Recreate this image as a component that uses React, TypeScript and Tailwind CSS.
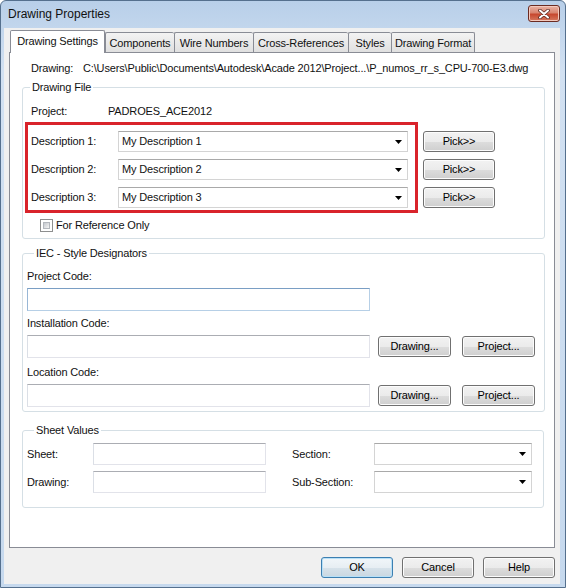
import type { ReactNode } from 'react';

const btnFace =
  'bg-[linear-gradient(to_bottom,#f2f2f2_0%,#ebebeb_50%,#dddddd_51%,#cfcfcf_100%)] shadow-[inset_0_0_0_1px_#fcfcfc]';

function WinButton({ label, className = '', primary = false }: { label: string; className?: string; primary?: boolean }) {
  return (
    <button
      className={`${className} h-[21px] rounded-[3px] border flex items-center justify-center text-black ${
        primary
          ? 'border-[#3c7fb1] bg-[linear-gradient(to_bottom,#f1f6f9_0%,#e7eef3_50%,#d7e2ea_51%,#c9d7e1_100%)] shadow-[inset_0_0_0_1px_#b8e0f7]'
          : `border-[#707070] ${btnFace}`
      }`}
    >
      {label}
    </button>
  );
}

function TextBox({ className = '', focused = false }: { className?: string; focused?: boolean }) {
  return (
    <div
      className={`${className} bg-white border ${
        focused
          ? 'border-[#b6cfe6] border-t-[#7a9ec4] border-l-[#98b7d6]'
          : 'border-[#e2e3ea] border-t-[#abadb3] border-l-[#dbdfe6]'
      }`}
    />
  );
}

function Combo({ value = '', className = '' }: { value?: string; className?: string }) {
  return (
    <div
      className={`${className} bg-white border border-[#d4d4d4] border-t-[#a9a9a9] flex items-center pl-[3px] pr-[5px]`}
    >
      <span className="flex-1 truncate">{value}</span>
      <svg width="7" height="4" viewBox="0 0 7 4" className="shrink-0">
        <path d="M0 0H7L3.5 4Z" fill="#000" />
      </svg>
    </div>
  );
}

function Group({ title, children, className = '' }: { title: string; children: ReactNode; className?: string }) {
  return (
    <fieldset className={`${className} border border-[#d5dfe5] rounded-[3px] flex flex-col`}>
      <legend className="ml-[7px] px-[2px] leading-[13px]">{title}</legend>
      {children}
    </fieldset>
  );
}

const tabs = ['Components', 'Wire Numbers', 'Cross-References', 'Styles', 'Drawing Format'];
const tabWidths = ['w-[69px]', 'w-[79px]', 'w-[95px]', 'w-[43px]', 'w-[84px] border-r'];

export default function App() {
  return (
    <div className="w-[566px] h-[588px] flex flex-col border border-[#55708e] rounded-t-[6px] bg-[linear-gradient(to_bottom,#b8cfe9_0%,#d2e1f2_12%,#c6d9ee_100%)] font-['Liberation_Sans',Arial,sans-serif] text-[11px] leading-[13px] tracking-[-0.15px] text-[#111]">
      {/* title bar */}
      <div className="h-[27px] flex items-start pl-[7px] pr-[5px] shrink-0">
        <span className="mt-[6px] text-[12px] leading-[15px] tracking-normal">Drawing Properties</span>
        <div className="ml-auto mt-[4px] w-[32px] h-[17px] rounded-[3px] border border-[#6b2b22] bg-[linear-gradient(to_bottom,#eab2a4_0%,#d98570_45%,#c7482f_55%,#d6795f_100%)] shadow-[inset_0_0_0_1px_#f3c9bd] flex items-center justify-center">
          <svg width="12" height="10" viewBox="0 0 12 10">
            <path d="M2 1.5L10 8.5M10 1.5L2 8.5" stroke="#5a2a22" strokeWidth="3.6" strokeLinecap="round" />
            <path d="M2 1.5L10 8.5M10 1.5L2 8.5" stroke="#ffffff" strokeWidth="2" strokeLinecap="round" />
          </svg>
        </div>
      </div>

      {/* client */}
      <div className="ml-[3px] mr-[5px] mb-[3px] h-[556px] bg-[#f0f0f0] px-[5px] pt-[2px] flex flex-col">
        {/* tab strip */}
        <div className="h-[22px] flex items-end pl-[1px] shrink-0">
          <div className="relative z-10 -mb-[1px] w-[95px] h-[23px] bg-white border border-b-0 border-[#898c95] rounded-t-[2px] flex items-center justify-center pb-[1px]">
            Drawing Settings
          </div>
          {tabs.map((t, i) => (
            <div
              key={t}
              className={`${tabWidths[i]} h-[20px] border-t border-l border-[#898c95] rounded-t-[2px] bg-[linear-gradient(to_bottom,#f3f3f3,#e0e0e0)] flex items-center justify-center pt-[1px]`}
            >
              {t}
            </div>
          ))}
        </div>

        {/* panel */}
        <div className="flex-1 bg-white border border-[#898c95] pt-[9px] pl-[12px] pr-[9px] flex flex-col">
          <div className="flex h-[13px] pl-[9px]">
            <span className="w-[52px]">Drawing:</span>
            <span>C:\Users\Public\Documents\Autodesk\Acade 2012\Project...\P_numos_rr_s_CPU-700-E3.dwg</span>
          </div>

          <Group title="Drawing File" className="mt-[6px] pb-[6px]">
            <div className="flex h-[13px] mt-[11px] pl-[8px]">
              <span className="w-[77px]">Project:</span>
              <span>PADROES_ACE2012</span>
            </div>
            <div className="flex mt-[4px]">
              <div className="ml-[2px] border-[3px] border-[#d9232b] pt-[6px] pb-[2px] pl-[3px] pr-[7px] flex flex-col gap-[7px]">
                {[1, 2, 3].map((n) => (
                  <div key={n} className="flex items-center h-[21px]">
                    <span className="w-[87px]">Description {n}:</span>
                    <Combo value={`My Description ${n}`} className="w-[290px] h-[21px]" />
                  </div>
                ))}
              </div>
              <div className="ml-[5px] pt-[9px] flex flex-col gap-[7px]">
                <WinButton label="Pick>>" className="w-[72px]" />
                <WinButton label="Pick>>" className="w-[72px]" />
                <WinButton label="Pick>>" className="w-[72px]" />
              </div>
            </div>
            <div className="flex items-center h-[13px] mt-[6px] pl-[17px] gap-[3px]">
              <div className="w-[13px] h-[13px] border border-[#8e8f8f] bg-white p-[2px]">
                <div className="w-full h-full bg-[linear-gradient(135deg,#c4c8ce,#f4f4f4)] border border-[#b3b7bd]" />
              </div>
              <span>For Reference Only</span>
            </div>
          </Group>

          <Group title="IEC - Style Designators" className="mt-[8px] pb-[4px] pl-[4px]">
            <div className="h-[13px] mt-[10px]">Project Code:</div>
            <TextBox focused className="mt-[5px] w-[343px] h-[23px]" />
            <div className="h-[13px] mt-[6px]">Installation Code:</div>
            <div className="flex items-center mt-[5px]">
              <TextBox className="w-[343px] h-[23px]" />
              <WinButton label="Drawing..." className="ml-[8px] w-[73px]" />
              <WinButton label="Project..." className="ml-[11px] w-[73px]" />
            </div>
            <div className="h-[13px] mt-[8px]">Location Code:</div>
            <div className="flex items-center mt-[5px]">
              <TextBox className="w-[343px] h-[23px]" />
              <WinButton label="Drawing..." className="ml-[8px] w-[73px]" />
              <WinButton label="Project..." className="ml-[11px] w-[73px]" />
            </div>
          </Group>

          <Group title="Sheet Values" className="mt-[12px] mr-[1px] pb-[14px] pl-[4px]">
            <div className="flex items-center mt-[6px]">
              <span className="w-[66px]">Sheet:</span>
              <TextBox className="w-[173px] h-[22px]" />
              <span className="ml-[26px] w-[82px]">Section:</span>
              <Combo className="w-[158px] h-[22px]" />
            </div>
            <div className="flex items-center mt-[6px]">
              <span className="w-[66px]">Drawing:</span>
              <TextBox className="w-[173px] h-[22px]" />
              <span className="ml-[26px] w-[82px]">Sub-Section:</span>
              <Combo className="w-[158px] h-[22px]" />
            </div>
          </Group>
        </div>

        {/* dialog buttons */}
        <div className="flex justify-end gap-[9px] mt-[9px] mb-[6px] shrink-0">
          <WinButton label="OK" primary className="w-[72px]" />
          <WinButton label="Cancel" className="w-[72px]" />
          <WinButton label="Help" className="w-[72px]" />
        </div>
      </div>
    </div>
  );
}
